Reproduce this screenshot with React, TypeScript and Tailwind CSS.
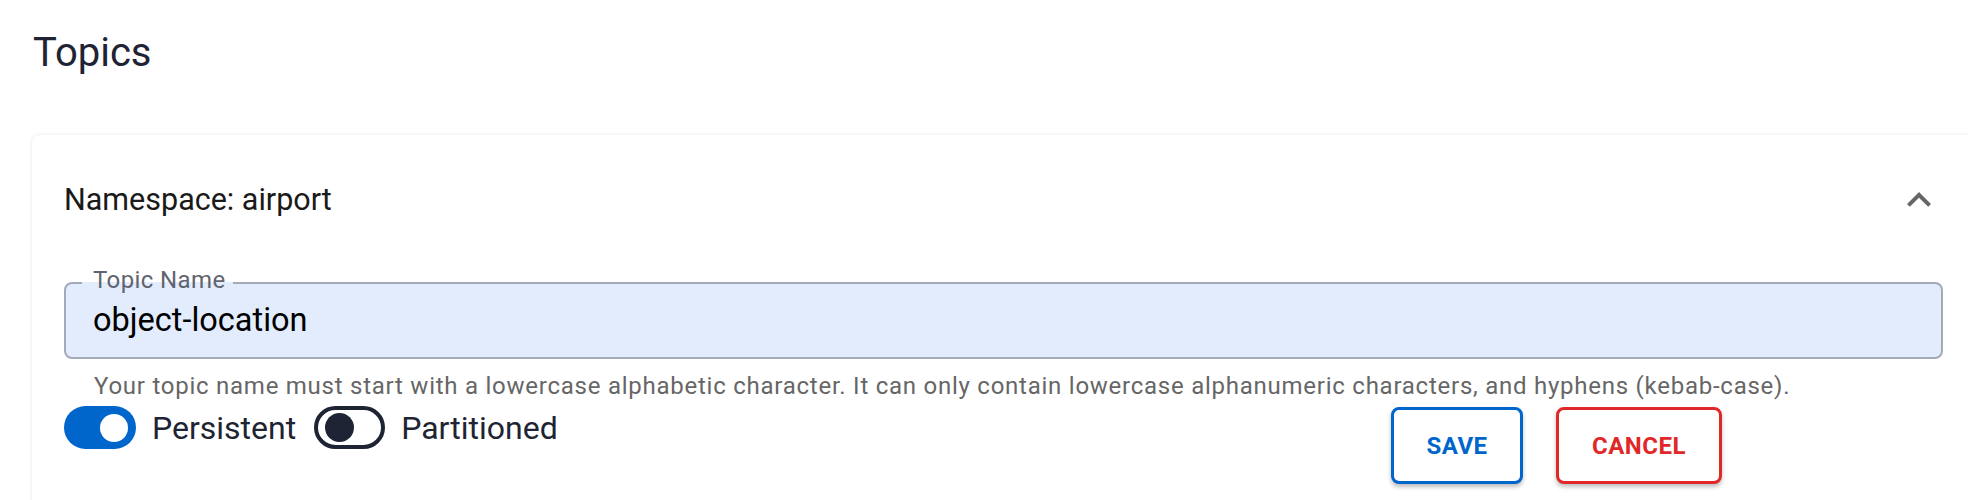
import React from 'react';

const ExpandLess = () => (
  <svg width="48" height="48" viewBox="0 0 24 24" className="fill-[#666666]">
    <path d="M12 8l-6 6 1.41 1.41L12 10.83l4.59 4.58L18 14z" />
  </svg>
);

interface SwitchProps {
  checked: boolean;
  label: string;
}

const Switch: React.FC<SwitchProps> = ({ checked, label }) => (
  <div className="flex items-center">
    {checked ? (
      <div className="w-[72px] h-[43px] rounded-full bg-[#0066cc] flex items-center justify-end pr-[8px]">
        <div className="w-[28px] h-[28px] rounded-full bg-white" />
      </div>
    ) : (
      <div className="w-[71px] h-[43px] rounded-full border-[4px] border-[#1e2433] bg-white flex items-center pl-[7px]">
        <div className="w-[29px] h-[29px] rounded-full bg-[#1e2433]" />
      </div>
    )}
    <span className="ml-[16px] text-[32px] leading-none text-[#1e2433]">{label}</span>
  </div>
);

export default function App() {
  return (
    <div className="w-full h-[500px] overflow-hidden bg-white font-['Roboto',sans-serif]">
      <h1 className="pl-[33px] pt-[29px] text-[40px] leading-[48px] text-[#1e2433]">Topics</h1>

      {/* Namespace card */}
      <div className="ml-[32px] mt-[58px] w-[1943px] rounded-tl-[8px] rounded-tr-[8px] bg-white shadow-[0_0_4px_rgba(0,0,0,0.1)] px-[32px] pb-[40px]">
        <div className="h-[130px] flex items-center justify-between">
          <span className="text-[30.5px] leading-none text-[#1a1a1a]">Namespace: airport</span>
          <ExpandLess />
        </div>

        <div className="relative mt-[17px] h-[77px] rounded-[8px] border-2 border-[#a3aab8] bg-[#e3ecfd] flex items-center pl-[27px]">
          <span className="absolute left-[16px] top-[-2px] w-[151px] h-[2px] bg-[#e3ecfd]" />
          <span className="absolute left-[27px] top-[-16px] text-[24px] leading-[24px] tracking-[0.4px] text-[#5f6470]">Topic Name</span>
          <span className="text-[32.5px] leading-none text-black">object-location</span>
        </div>

        <p className="mt-[14.5px] pl-[30px] text-[24px] leading-[24px] tracking-[0.75px] text-[#666666]">
          Your topic name must start with a lowercase alphabetic character. It can only contain lowercase alphanumeric characters, and hyphens (kebab-case).
        </p>

        <div className="mt-[8.5px] flex items-start">
          <div className="flex items-center gap-[18px]">
            <Switch checked label="Persistent" />
            <Switch checked={false} label="Partitioned" />
          </div>
          <div className="ml-auto mr-[221px] flex items-center gap-[33px] mt-[1px]">
            <button className="w-[132px] h-[77px] rounded-[8px] border-[3px] border-[#0066cc] bg-white text-[#0066cc] text-[24px] font-bold tracking-[0.5px] shadow-[0_3px_4px_rgba(0,0,0,0.25)]">
              SAVE
            </button>
            <button className="w-[166px] h-[77px] rounded-[8px] border-[3px] border-[#e02828] bg-white text-[#e02828] text-[24px] font-bold tracking-[0.5px] shadow-[0_3px_4px_rgba(0,0,0,0.25)]">
              CANCEL
            </button>
          </div>
        </div>
      </div>
    </div>
  );
}
